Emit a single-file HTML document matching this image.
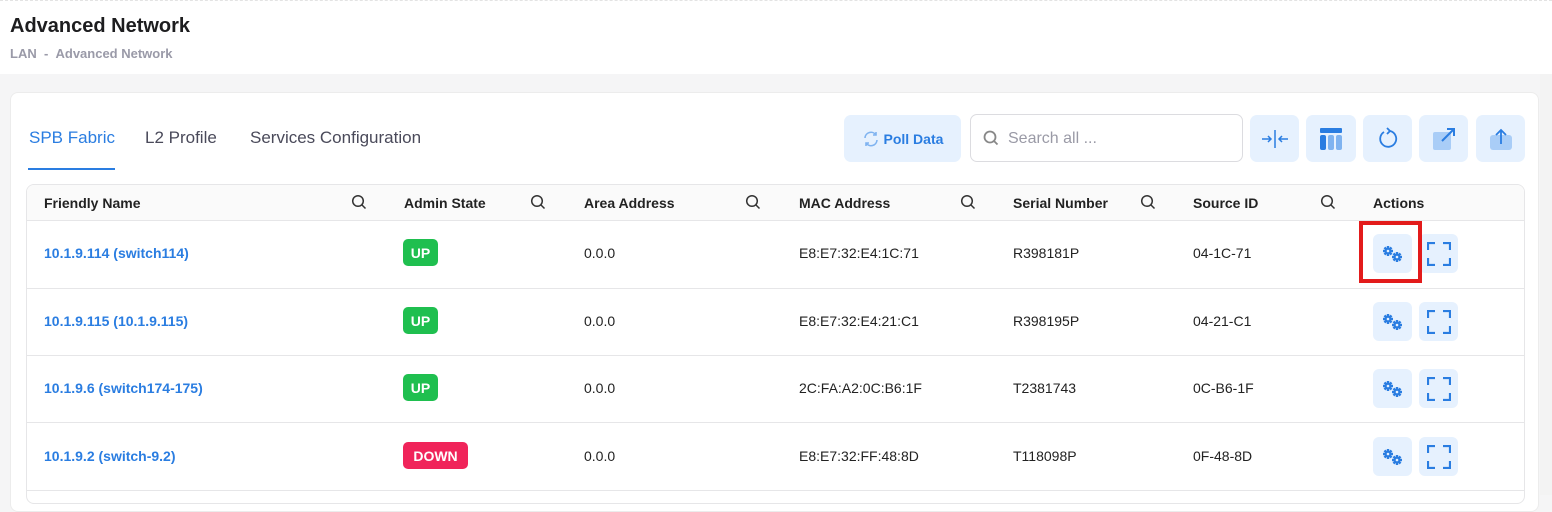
<!DOCTYPE html>
<html><head><meta charset="utf-8"><style>
*{box-sizing:border-box;margin:0;padding:0}
body{width:1552px;height:495px;overflow:hidden;background:#f5f5f6;font-family:"Liberation Sans",sans-serif;position:relative}
.hdr{position:absolute;left:0;top:0;width:1552px;height:74px;background:#fff;border-top:1px dashed #e3e3e3}
.hdr h1{position:absolute;left:10px;top:14px;font-size:20px;font-weight:bold;color:#1d1d1f}
.hdr .bc{position:absolute;left:10px;top:45px;font-size:13px;color:#9a9aa8;font-weight:bold}
.card{position:absolute;left:10px;top:92px;width:1529px;height:420px;background:#fff;border:1px solid #ececec;border-radius:8px}
.sb{position:absolute;left:1540px;top:74px;width:12px;height:421px;background:#f3f3f3}
.tab{position:absolute;top:128px;font-size:17px;color:#4a4a5a}
.btn{position:absolute;top:115px;height:47px;background:#e6f1fe;border-radius:7px;display:flex;align-items:center;justify-content:center}
.search{position:absolute;left:970px;top:114px;width:273px;height:48px;border:1px solid #dcdce0;border-radius:7px;background:#fff}
.tbl{position:absolute;left:26px;top:184px;width:1499px;height:320px;border:1px solid #e6e6e8;border-radius:8px;overflow:hidden}
.th{position:absolute;left:0;top:0;width:100%;height:36px;background:#fafafa;border-bottom:1px solid #e6e6e8}
.t{position:absolute;font-size:14px;color:#222}
.h{font-weight:bold;top:11px}
.row{position:absolute;left:0;width:100%;border-bottom:1px solid #e6e6e8}
.lnk{color:#2a7de1;font-weight:bold}
.badge{position:absolute;height:27px;border-radius:5px;color:#fff;font-weight:bold;font-size:14px;display:flex;align-items:center;justify-content:center}
.ab{position:absolute;width:39px;height:39px;background:#e6f1fe;border-radius:6px;display:flex;align-items:center;justify-content:center}
</style></head><body>
<div class="hdr"><h1>Advanced Network</h1><div class="bc">LAN &nbsp;- &nbsp;Advanced Network</div></div>
<div class="sb"></div>
<div class="card"></div>
<div class="tab" style="left:29px;color:#2a7de1">SPB Fabric</div>
<div style="position:absolute;left:28px;top:168px;width:87px;height:2px;background:#2a7de1"></div>
<div class="tab" style="left:145px">L2 Profile</div>
<div class="tab" style="left:250px">Services Configuration</div>
<div class="btn" style="left:844px;width:117px;color:#2a7de1;font-weight:bold;font-size:14px"><svg width="18" height="18" viewBox="0 0 18 18" fill="none" stroke="#7fb3f0" stroke-width="1.6"><path d="M3 8a6 6 0 0 1 11-3M15 10a6 6 0 0 1-11 3"/><path d="M14 2v3h-3M4 16v-3h3"/></svg>&nbsp;Poll Data</div>
<div class="search"><svg style="position:absolute;left:12px;top:15px" width="16" height="16" viewBox="0 0 16 16" fill="none" stroke="#888" stroke-width="1.8"><circle cx="7" cy="7" r="5.5"/><path d="M11 11l3.5 3.5"/></svg><span style="position:absolute;left:37px;top:15px;font-size:16px;color:#9a9aa6">Search all ...</span></div>
<div class="btn" style="left:1250px;width:49px"><svg width="30" height="20" viewBox="0 0 30 20" fill="none" stroke="#2a7de1" stroke-width="1.5"><path d="M15 1v18M2 10h9M8 7l3 3-3 3M28 10h-9M22 7l-3 3 3 3"/></svg></div>
<div class="btn" style="left:1306px;width:50px"><svg width="22" height="22" viewBox="0 0 22 22"><rect x="0" y="0" width="22" height="5" rx="1" fill="#2a7de1"/><rect x="0" y="7" width="6" height="15" rx="2" fill="#2a7de1"/><rect x="8" y="7" width="6" height="15" rx="2" fill="#7fb3f0"/><rect x="16" y="7" width="6" height="15" rx="2" fill="#7fb3f0"/></svg></div>
<div class="btn" style="left:1363px;width:49px"><svg width="20" height="24" viewBox="0 0 20 24" fill="none" stroke="#2a7de1" stroke-width="1.8"><path d="M12 4a8 8 0 1 1-6 1"/><path d="M9 1l3 3-3 3"/></svg></div>
<div class="btn" style="left:1419px;width:49px"><svg width="24" height="24" viewBox="0 0 24 24"><rect x="1" y="5" width="18" height="18" rx="2" fill="#a9cdf7"/><path d="M10 14L22 2M15 2h7v7" stroke="#2a7de1" stroke-width="2" fill="none"/></svg></div>
<div class="btn" style="left:1476px;width:49px"><svg width="24" height="24" viewBox="0 0 24 24"><rect x="1" y="8" width="22" height="15" rx="3" fill="#a9cdf7"/><path d="M12 17V3M7 8l5-5 5 5" stroke="#2a7de1" stroke-width="1.8" fill="none"/></svg></div>

<div class="tbl">
<div class="th"></div>
<div class="row" style="top:36px;height:68px"></div>
<div class="row" style="top:104px;height:67px"></div>
<div class="row" style="top:171px;height:67px"></div>
<div class="row" style="top:238px;height:68px"></div>
</div>
<div id="cols"></div>
<script>
var hs=[["Friendly Name",44,359],["Admin State",404,538],["Area Address",584,753],["MAC Address",799,968],["Serial Number",1013,1148],["Source ID",1193,1328],["Actions",1373,0]];
var o="";
hs.forEach(function(h){o+='<div class="t h" style="left:'+h[1]+'px;top:195px">'+h[0]+'</div>';if(h[2])o+='<svg style="position:absolute;left:'+(h[2]-8)+'px;top:194px" width="16" height="16" viewBox="0 0 16 16" fill="none" stroke="#333" stroke-width="1.5"><circle cx="7" cy="7" r="5.3"/><path d="M11 11l3.5 3.5"/></svg>';});
var rows=[["10.1.9.114 (switch114)","UP","E8:E7:32:E4:1C:71","R398181P","04-1C-71",253],["10.1.9.115 (10.1.9.115)","UP","E8:E7:32:E4:21:C1","R398195P","04-21-C1",321],["10.1.9.6 (switch174-175)","UP","2C:FA:A2:0C:B6:1F","T2381743","0C-B6-1F",388],["10.1.9.2 (switch-9.2)","DOWN","E8:E7:32:FF:48:8D","T118098P","0F-48-8D",456]];
var g1='<circle r="3.4"/><rect x="-1.2" y="-5" width="2.4" height="10"/><rect x="-5" y="-1.2" width="10" height="2.4"/><rect x="-1.2" y="-5" width="2.4" height="10" transform="rotate(45)"/><rect x="-1.2" y="-5" width="2.4" height="10" transform="rotate(-45)"/><circle r="1.3" fill="#e6f1fe"/>';
var gear='<svg width="22" height="18" viewBox="0 0 22 18" fill="#2a7de1"><g transform="translate(6,6)">'+g1+'</g><g transform="translate(15,12)">'+g1+'</g></svg>';
var fs='<svg width="24" height="24" viewBox="0 0 24 24" fill="none" stroke="#2a7de1" stroke-width="2.2"><path d="M1 8V1h7M16 1h7v7M23 16v7h-7M8 23H1v-7"/></svg>';
rows.forEach(function(r){var y=r[5];
o+='<div class="t lnk" style="left:44px;top:'+(y-8)+'px">'+r[0]+'</div>';
var d=r[1]=="DOWN";
o+='<div class="badge" style="left:403px;top:'+(y-14)+'px;width:'+(d?65:35)+'px;background:'+(d?'#f0245a':'#1fbf4f')+'">'+r[1]+'</div>';
o+='<div class="t" style="left:584px;top:'+(y-8)+'px">0.0.0</div><div class="t" style="left:799px;top:'+(y-8)+'px">'+r[2]+'</div><div class="t" style="left:1013px;top:'+(y-8)+'px">'+r[3]+'</div><div class="t" style="left:1193px;top:'+(y-8)+'px">'+r[4]+'</div>';
o+='<div class="ab" style="left:1373px;top:'+(y-19)+'px">'+gear+'</div><div class="ab" style="left:1419px;top:'+(y-19)+'px">'+fs+'</div>';});
o+='<div style="position:absolute;left:1359px;top:221px;width:63px;height:62px;border:4px solid #e31b1b"></div>';
document.getElementById("cols").innerHTML=o;
</script>
</body></html>
